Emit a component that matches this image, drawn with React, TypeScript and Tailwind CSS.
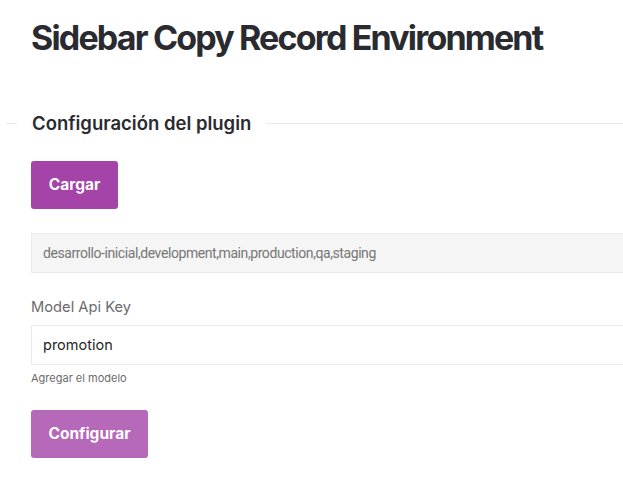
export default function App() {
  return (
    <div className="h-[483px] w-[623px] overflow-hidden bg-white font-['Inter',sans-serif] text-[#2b2b32]">
      <div className="pl-[31px] pt-[17px]">
        <h1 className="text-[34px] font-bold leading-[42px] tracking-[-0.054em] text-[#2a2b30]">
          Sidebar Copy Record Environment
        </h1>
      </div>

      {/* Fieldset legend */}
      <div className="mt-[53px] flex items-center">
        <div className="ml-[6px] h-px w-[11px] bg-[#e8e8e8]" />
        <h2 className="mx-[15px] text-[18.5px] font-semibold leading-[22px] text-[#2a2b30]">
          Configuración del plugin
        </h2>
        <div className="h-px flex-1 bg-[#e8e8e8]" />
      </div>

      <div className="pl-[31px]">
        <button className="mt-[27px] h-[48px] w-[87px] rounded-[3px] bg-[#a444a8] text-[15.5px] font-bold text-white">
          Cargar
        </button>

        <div className="mt-[24px] flex h-[40px] w-[calc(100%+6px)] items-center border border-[#ebebeb] bg-[#f5f5f5] px-[11px] font-['Roboto',sans-serif] text-[14px] tracking-[-0.03em] text-[#767676]">
          desarrollo-inicial,development,main,production,qa,staging
        </div>

        <label className="mt-[24px] block text-[14.7px] leading-[20px] text-[#6b6b6b]">
          Model Api Key
        </label>
        <div className="mt-[8px] flex h-[40px] w-[calc(100%+6px)] items-center border border-[#ebebeb] bg-white px-[11px] text-[14.5px] text-[#1f1f1f]">
          promotion
        </div>
        <p className="mt-[6px] text-[11px] leading-[14px] text-[#6b6b6b]">
          Agregar el modelo
        </p>

        <button className="mt-[25px] h-[48px] w-[117px] rounded-[3px] bg-[#b569b8] text-[15.5px] font-bold text-white">
          Configurar
        </button>
      </div>
    </div>
  );
}
